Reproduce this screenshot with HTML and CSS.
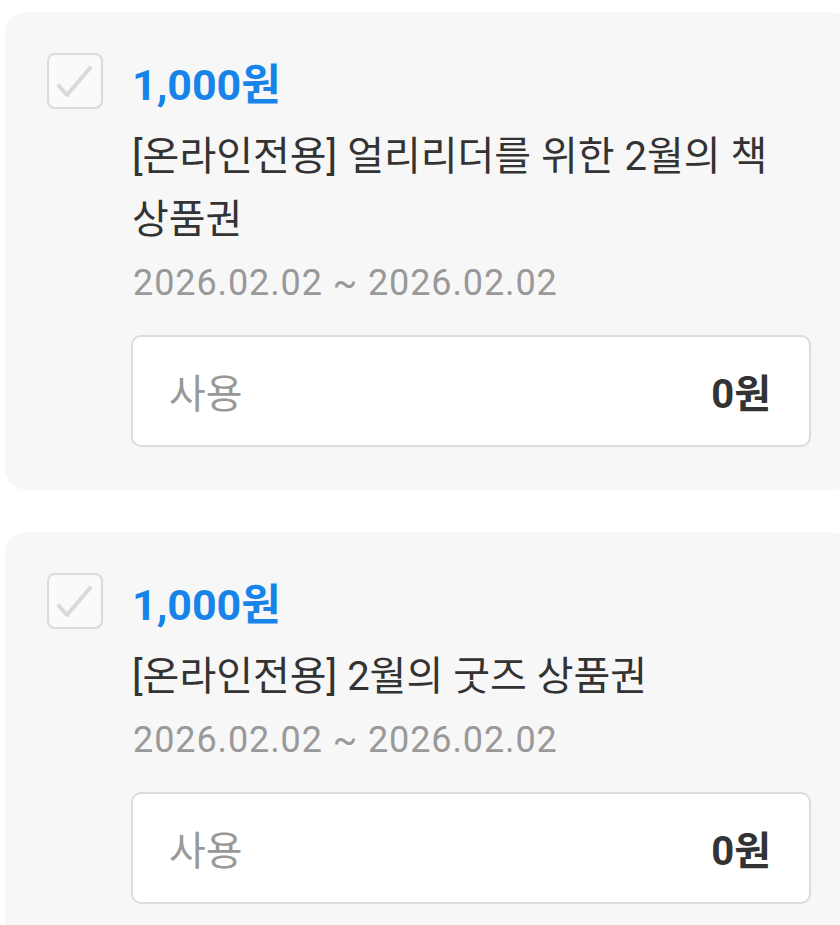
FILE: index.html
```html
<!DOCTYPE html>
<html>
  <head>
    <meta name="viewport" content="width=device-width, initial-scale=1">
    <title>쿠폰 선택</title>
    <link rel="stylesheet" href="styles.css">
  </head>
<body>
  <div class="couponlist">

    <div class="coupon">
      <span class="check">
        <svg width="52" height="52" viewBox="0 0 52 52"><path d="M10 31 L18 40 L41 13" fill="none" stroke="#d9d9d9" stroke-width="4" stroke-linecap="round" stroke-linejoin="round"/></svg>
      </span>
      <div class="info">
        <div class="amount">1,000원</div>
        <div class="name">[온라인전용] 얼리리더를 위한 2월의 책 상품권</div>
        <div class="period">2026.02.02 ~ 2026.02.02</div>
        <div class="usebox">
          <span class="uselabel">사용</span>
          <span class="usevalue">0원</span>
        </div>
      </div>
    </div>

    <div class="coupon">
      <span class="check">
        <svg width="52" height="52" viewBox="0 0 52 52"><path d="M10 31 L18 40 L41 13" fill="none" stroke="#d9d9d9" stroke-width="4" stroke-linecap="round" stroke-linejoin="round"/></svg>
      </span>
      <div class="info">
        <div class="amount">1,000원</div>
        <div class="name">[온라인전용] 2월의 굿즈 상품권</div>
        <div class="period">2026.02.02 ~ 2026.02.02</div>
        <div class="usebox">
          <span class="uselabel">사용</span>
          <span class="usevalue">0원</span>
        </div>
      </div>
    </div>

  </div>
</body>
</html>
```

FILE: styles.css
```css
body, html {margin: 0; padding: 0; background-color: white; overflow: hidden;}

body {
  font-family: Roboto, "Noto Sans CJK KR", sans-serif;
}

.couponlist {
  display: flex;
  flex-direction: column;
  gap: 42px;
  padding: 12px 0 0 5px;
}

.coupon {
  display: flex;
  gap: 28px;
  width: 848px;
  box-sizing: border-box;
  padding: 41px 42px 43px 42px;
  background-color: rgb(247, 247, 247);
  border-radius: 22px;
}

.check {
  flex: 0 0 auto;
  width: 52px;
  height: 52px;
  border: 2px solid rgb(218, 218, 218);
  border-radius: 8px;
  background-color: rgb(250, 250, 250);
}

.check svg {
  display: block;
}

.info {
  flex: 1;
  display: flex;
  flex-direction: column;
}

.amount {
  color: rgb(22, 132, 232);
  font-size: 43px;
  font-weight: bold;
  line-height: 64px;
  margin-left: 1px;
}

.name {
  margin-top: 8px;
  color: rgb(51, 51, 51);
  font-size: 40px;
  line-height: 63px;
  margin-left: 1px;
}

.period {
  color: rgb(153, 153, 153);
  font-size: 36px;
  letter-spacing: 0.9px;
  line-height: 64px;
  margin-left: 2px;
}

.usebox {
  margin-top: 20px;
  display: flex;
  justify-content: space-between;
  align-items: center;
  height: 112px;
  box-sizing: border-box;
  padding: 0 38px 0 36px;
  background-color: white;
  border: 2px solid rgb(220, 220, 220);
  border-radius: 10px;
}

.uselabel {
  color: rgb(153, 153, 153);
  font-size: 40px;
}

.usevalue {
  color: rgb(51, 51, 51);
  font-size: 40px;
  font-weight: bold;
}
```
